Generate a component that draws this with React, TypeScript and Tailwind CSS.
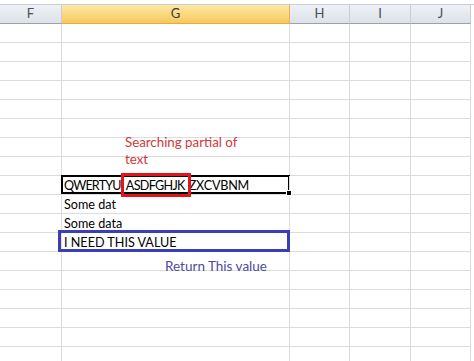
import React from "react";

const cols = [
  { key: "F", w: 62 },
  { key: "G", w: 228 },
  { key: "H", w: 60 },
  { key: "I", w: 61 },
  { key: "J", w: 60 },
];

const cellText: Record<number, React.ReactNode> = {
  8: (
    <span className="flex">
      <span className="tracking-[-0.8px]">QWERTYU</span>
      <span className="relative ml-[5px] tracking-[-0.7px]">
        ASDFGHJK
        <span className="pointer-events-none absolute -left-[5px] -right-[6px] -top-[5px] bottom-[-3px] z-10 border-[3px] border-[#e3141c]" />
      </span>
      <span className="ml-[4px] tracking-[-0.2px]">ZXCVBNM</span>
    </span>
  ),
  9: "Some dat",
  10: "Some data",
  11: "I NEED THIS VALUE",
};

export default function App() {
  const rows = Array.from({ length: 18 }, (_, i) => i);
  return (
    <div
      className="relative w-[474px] h-[361px] overflow-hidden bg-white pt-[4px]"
      style={{ fontFamily: "Lato, 'Open Sans', sans-serif" }}
    >
      {/* header */}
      <div className="flex h-[20px] border-t border-[#c9ced6]">
        {cols.map((c) => (
          <div
            key={c.key}
            style={{ width: c.w }}
            className={
              c.key === "G"
                ? "flex items-center justify-center border-r border-b border-r-[#e3b45a] border-b-[#eaa93a] bg-gradient-to-b from-[#fde9a2] to-[#f6c85c] text-[13px] text-[#3a3a3a]"
                : "flex items-center justify-center border-r border-b border-r-[#c9ced6] border-b-[#9aa3ad] bg-gradient-to-b from-[#eef1f5] to-[#dde2e8] text-[13px] text-[#4a4f55]"
            }
          >
            {c.key}
          </div>
        ))}
      </div>
      {/* body */}
      {rows.map((r) => (
        <div key={r} className="flex h-[19px]">
          {cols.map((c) => (
            <div
              key={c.key}
              style={{ width: c.w }}
              className={
                "relative flex items-end border-r border-b border-[#dcdcdc] pl-[2px] text-[12.6px] leading-[16px] text-black whitespace-pre" +
                (c.key === "G" && r === 8 ? " z-10" : "")
              }
            >
              {c.key === "G" && cellText[r] ? cellText[r] : null}
            </div>
          ))}
        </div>
      ))}

      {/* overlays */}
      <div className="pointer-events-none absolute left-[61px] top-[175px] h-[19px] w-[229px] border-2 border-black" />
      <div className="pointer-events-none absolute left-[286px] top-[190px] z-20 h-[6px] w-[6px] border border-white bg-black" />
      <div className="pointer-events-none absolute left-[58px] top-[230px] h-[22px] w-[232px] border-[3px] border-[#3b3fb6]" />

      <div className="absolute left-[125px] top-[134px] text-[13.3px] leading-[17px] text-[#d03838] whitespace-nowrap">
        Searching partial of
        <br />
        text
      </div>
      <div className="absolute left-[165px] top-[258px] text-[13.5px] leading-[17px] text-[#4b4ba6] whitespace-nowrap">
        Return This value
      </div>
    </div>
  );
}
